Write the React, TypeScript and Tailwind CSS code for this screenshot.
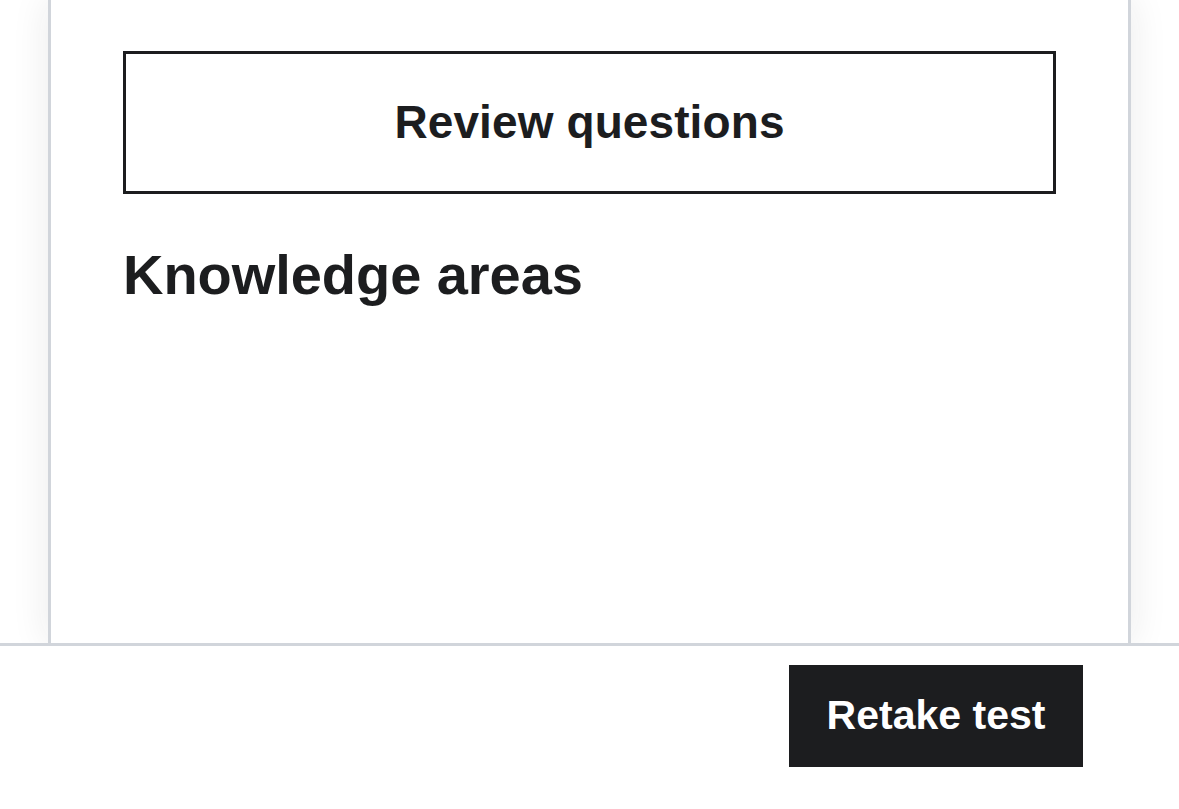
export default function App() {
  return (
    <main
      className="flex h-[809px] w-[1179px] flex-col bg-white text-[#1c1d1f]"
      style={{ fontFamily: '"Liberation Sans", Arial, sans-serif' }}>
      <section className="flex h-[643px] overflow-hidden bg-white pl-[48px] pr-[48px]">
        <div className="flex flex-1 flex-col border-x-[3px] border-[#d1d5db] bg-white px-[72px] pt-[51px] shadow-[0_0_36px_rgba(28,29,31,0.09)]">
          <button
            type="button"
            className="flex h-[143px] w-full items-center justify-center border-[3px] border-[#1c1d1f] text-[46px] font-bold tracking-[0.1px]">
            Review questions
          </button>
          <h2 className="mt-[47px] text-[56px] leading-[1.2] font-bold tracking-[-0.05px]">Knowledge areas</h2>
        </div>
      </section>
      <footer className="flex flex-1 justify-end border-t-[3px] border-[#d1d5db] pr-[96px] pt-[19px]">
        <button
          type="button"
          className="flex h-[102px] w-[294px] items-center justify-center bg-[#1c1d1f] text-[41px] font-bold text-white">
          Retake test
        </button>
      </footer>
    </main>
  );
}
